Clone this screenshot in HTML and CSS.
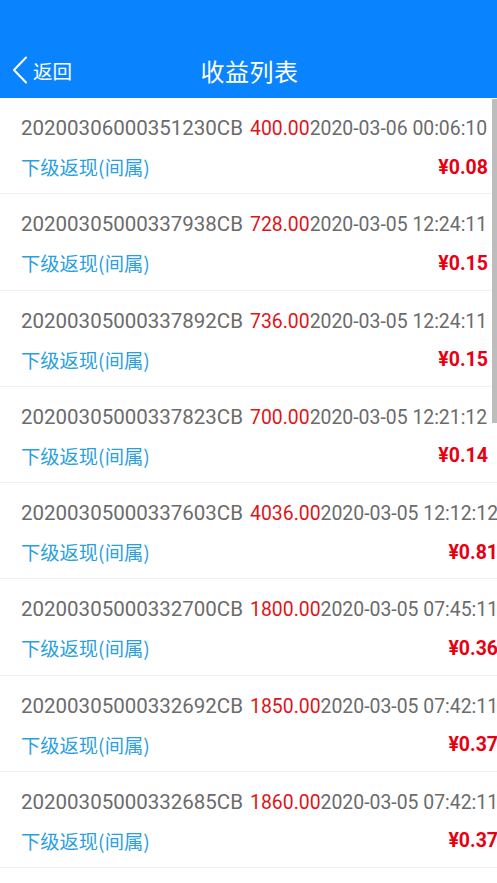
FILE: index.html
```html
<!DOCTYPE html>
<html lang="zh-CN">
<head>
<meta charset="utf-8">
<title>收益列表</title>
<link rel="stylesheet" href="styles.css">
</head>
<body>
<div class="page">
  <header class="header">
    <div class="nav">
      <a class="back">
        <svg class="back-icon" width="18" height="28" viewBox="0 0 18 28"><path d="M15 1.5 L3 14 L15 26.5" fill="none" stroke="#fff" stroke-width="2" stroke-linecap="round" stroke-linejoin="round"/></svg>
        <span class="back-text">返回</span>
      </a>
      <h1 class="title">收益列表</h1>
    </div>
  </header>
  <main class="list">
    <div class="row">
      <div class="line1">20200306000351230CB <span class="rest"><span class="num">400.00</span>2020-03-06 00:06:10</span></div>
      <div class="line2"><span class="type">下级返现(间属)</span><span class="amount">¥0.08</span></div>
    </div>
    <div class="row">
      <div class="line1">20200305000337938CB <span class="rest"><span class="num">728.00</span>2020-03-05 12:24:11</span></div>
      <div class="line2"><span class="type">下级返现(间属)</span><span class="amount">¥0.15</span></div>
    </div>
    <div class="row">
      <div class="line1">20200305000337892CB <span class="rest"><span class="num">736.00</span>2020-03-05 12:24:11</span></div>
      <div class="line2"><span class="type">下级返现(间属)</span><span class="amount">¥0.15</span></div>
    </div>
    <div class="row">
      <div class="line1">20200305000337823CB <span class="rest"><span class="num">700.00</span>2020-03-05 12:21:12</span></div>
      <div class="line2"><span class="type">下级返现(间属)</span><span class="amount">¥0.14</span></div>
    </div>
    <div class="row">
      <div class="line1">20200305000337603CB <span class="rest"><span class="num">4036.00</span>2020-03-05 12:12:12</span></div>
      <div class="line2"><span class="type">下级返现(间属)</span><span class="amount">¥0.81</span></div>
    </div>
    <div class="row">
      <div class="line1">20200305000332700CB <span class="rest"><span class="num">1800.00</span>2020-03-05 07:45:11</span></div>
      <div class="line2"><span class="type">下级返现(间属)</span><span class="amount">¥0.36</span></div>
    </div>
    <div class="row">
      <div class="line1">20200305000332692CB <span class="rest"><span class="num">1850.00</span>2020-03-05 07:42:11</span></div>
      <div class="line2"><span class="type">下级返现(间属)</span><span class="amount">¥0.37</span></div>
    </div>
    <div class="row">
      <div class="line1">20200305000332685CB <span class="rest"><span class="num">1860.00</span>2020-03-05 07:42:11</span></div>
      <div class="line2"><span class="type">下级返现(间属)</span><span class="amount">¥0.37</span></div>
    </div>
  </main>
  <div class="scrollbar"></div>
</div>
</body>
</html>
```
FILE: styles.css
```css
html, body {
  margin: 0;
  padding: 0;
  background: #fff;
}
body {
  font-family: Roboto, "Noto Sans CJK SC", sans-serif;
  overflow: hidden;
  height: 883px;
}
.page {
  position: relative;
  width: 497px;
  height: 883px;
  overflow: hidden;
}
.header {
  background: #0a84fe;
  height: 98px;
  padding-top: 42px;
  box-sizing: border-box;
}
.nav {
  position: relative;
  height: 56px;
  display: flex;
  align-items: center;
  justify-content: center;
}
.back {
  position: absolute;
  left: 11px;
  top: 0;
  bottom: 0;
  display: flex;
  align-items: center;
  gap: 4px;
  color: #fff;
}
.back-icon {
  display: block;
}
.back-text {
  font-family: "Noto Sans CJK SC", sans-serif;
  font-size: 19.5px;
}
.title {
  margin: 0;
  color: #fff;
  font-family: "Noto Sans CJK SC", sans-serif;
  font-weight: 400;
  font-size: 24px;
  letter-spacing: 0.5px;
  margin-left: 2px;
}
.list {
  display: flex;
  flex-direction: column;
}
.row {
  width: max-content;
  min-width: 100%;
  box-sizing: border-box;
  height: 96.25px;
  padding: 0 9px 0 21px;
  border-bottom: 1px solid #f0f0f0;
  display: flex;
  flex-direction: column;
}
.line1 {
  white-space: nowrap;
  font-size: 20.5px;
  color: #6b6b6b;
  height: 30px;
  line-height: 30px;
  margin-top: 15px;
  word-spacing: 2px;
}
.rest {
  font-size: 19.4px;
  word-spacing: 0;
}
.num {
  color: #e0141b;
}
.line2 {
  display: flex;
  justify-content: space-between;
  align-items: center;
  height: 30px;
  margin-top: 9px;
}
.type {
  font-family: "Noto Sans CJK SC", sans-serif;
  font-size: 19.3px;
  color: #2a9fe0;
}
.amount {
  font-size: 19.5px;
  font-weight: 700;
  color: #e60012;
}
.scrollbar {
  position: absolute;
  right: 0;
  top: 99px;
  width: 5.5px;
  height: 324px;
  background: #bdbdbd;
}
```
